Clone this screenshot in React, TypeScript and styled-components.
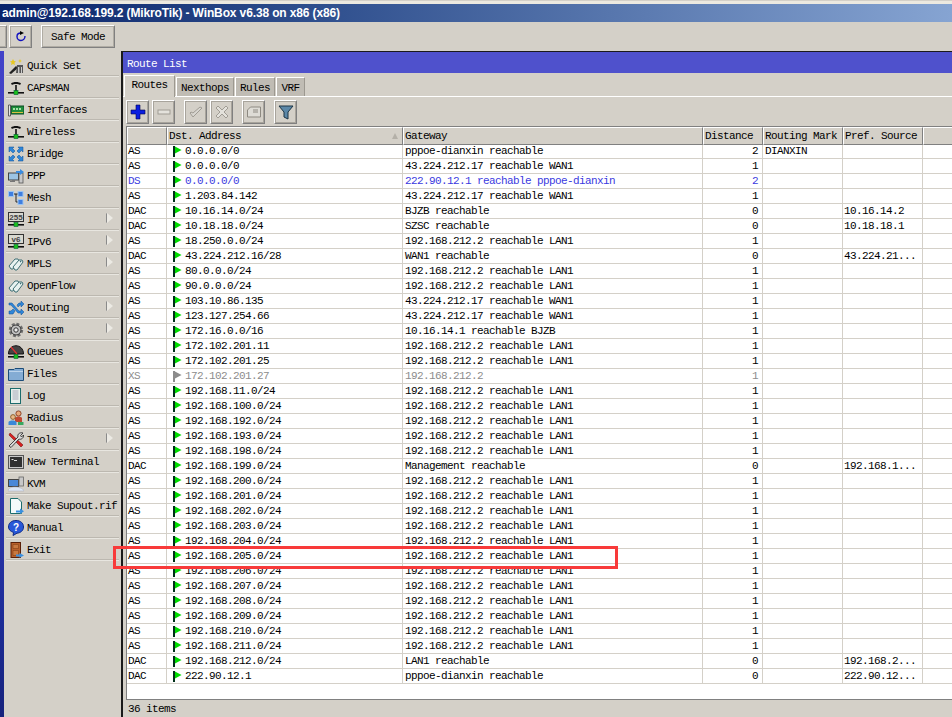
import React from "react";
import styled, { createGlobalStyle } from "styled-components";

const Global = createGlobalStyle`
  html, body { margin: 0; padding: 0; background: #d4d0c8; }
  * { box-sizing: border-box; }
`;

const MONO = `"Liberation Mono", "DejaVu Sans Mono", monospace`;

const Page = styled.div`
  position: relative;
  width: 952px;
  height: 717px;
  overflow: hidden;
  display: flex;
  flex-direction: column;
  background: #d4d0c8;
  font-family: ${MONO};
  font-size: 11px;
  letter-spacing: -0.6px;
  color: #000;
`;
const TopEdge = styled.div`
  height: 4px;
  flex: none;
  background: #ece9e0;
  border-top: 1px solid #d4d0c8;
`;
const TitleBar = styled.div`
  height: 18px;
  flex: none;
  background: linear-gradient(90deg, #0a246a 0%, #2d4d8c 32%, #86a4d2 100%);
  color: #fff;
  font-family: "Liberation Sans", Arial, sans-serif;
  font-weight: 700;
  font-size: 12px;
  letter-spacing: -0.13px;
  line-height: 18px;
  padding-left: 2px;
  white-space: nowrap;
`;
const TopBar = styled.div`
  height: 29px;
  flex: none;
  display: flex;
  align-items: flex-start;
  padding-top: 3px;
  margin-left: -9px;
  gap: 1px;
`;
const TopButton = styled.div<{ $w: number; $gap?: number }>`
  width: ${(p) => p.$w}px;
  height: 23px;
  margin-right: ${(p) => p.$gap ?? 0}px;
  border: 1px solid;
  border-color: #fff #808080 #808080 #fff;
  outline: 1px solid #b0aca4;
  outline-offset: -2px;
  display: flex;
  align-items: center;
  justify-content: center;
`;
const Body = styled.div`
  flex: 1;
  display: flex;
  min-height: 0;
`;
const Strip = styled.div`
  width: 4px;
  flex: none;
  background: linear-gradient(180deg, #4242c8 0%, #3a3cb8 55%, #1c2c98 85%, #16227c 100%);
`;
const Menu = styled.nav`
  width: 119px;
  flex: none;
  padding: 3px 2px 0 2px;
  border-right: 2px solid #1a1a1a;
`;
const MenuItem = styled.div`
  height: 22px;
  width: 113px;
  display: flex;
  align-items: center;
  gap: 3px;
  padding: 2px 0 0 2px;
  border-bottom: 1px solid #bcb8b0;
  box-shadow: 0 1px 0 #e8e6e0;
  position: relative;
  white-space: nowrap;
`;
const MenuIcon = styled.span`
  width: 16px;
  height: 16px;
  flex: none;
  display: block;
  svg { display: block; }
`;
const Arrow = styled.span`
  position: absolute;
  right: 6px;
  top: 5px;
  width: 0;
  height: 0;
  border-left: 6px solid #eceae4;
  border-top: 5px solid transparent;
  border-bottom: 5px solid transparent;
  filter: drop-shadow(-0.5px 0 0 #8a8a8a);
`;
const Window = styled.section`
  flex: 1;
  min-width: 0;
  display: flex;
  flex-direction: column;
  border-top: 1px solid #1a1a1a;
`;
const WinTitle = styled.div`
  height: 21px;
  flex: none;
  background: #4f51cc;
  color: #fff;
  line-height: 25px;
  padding-left: 4px;
  overflow: hidden;
`;
const Tabs = styled.div`
  height: 24px;
  flex: none;
  display: flex;
  align-items: flex-end;
  padding-left: 1px;
  border-bottom: 1px solid #fff;
`;
const Tab = styled.div<{ $w: number; $active?: boolean }>`
  width: ${(p) => p.$w}px;
  height: ${(p) => (p.$active ? 22 : 19)}px;
  margin-right: 1px;
  margin-bottom: ${(p) => (p.$active ? -1 : 0)}px;
  background: ${(p) => (p.$active ? "#d4d0c8" : "#c0bcb4")};
  border-top: 1px solid #fff;
  border-left: 1px solid #fff;
  border-right: 1px solid #9c9890;
  text-align: center;
  line-height: ${(p) => (p.$active ? 19 : 20)}px;
  position: relative;
`;
const Tools = styled.div`
  height: 29px;
  flex: none;
  display: flex;
  align-items: flex-start;
  padding: 3px 0 0 3px;
`;
const ToolButton = styled.div<{ $after: number }>`
  width: 23px;
  height: 24px;
  margin-right: ${(p) => p.$after}px;
  border: 1px solid;
  border-color: #fff #808080 #808080 #fff;
  outline: 1px solid #a8a49c;
  outline-offset: -2px;
  display: flex;
  align-items: center;
  justify-content: center;
`;
const Table = styled.div`
  flex: 1;
  min-height: 0;
  margin-left: 3px;
  background: #fff;
  border-top: 1px solid #808080;
  border-left: 1px solid #808080;
`;
const COLS = "40px 236px 300px 60px 80px 80px 1fr";
const HeadRow = styled.div`
  height: 17px;
  display: grid;
  grid-template-columns: ${COLS};
  background: #d4d0c8;
`;
const HeadCell = styled.div`
  position: relative;
  padding-left: 1px;
  line-height: 16px;
  white-space: nowrap;
  border-right: 1px solid #808080;
  border-bottom: 1px solid #808080;
  border-top: 1px solid #fff;
  border-left: 1px solid #fff;
  &:last-child { border-right: 0; }
`;
const Sort = styled.span`
  position: absolute;
  right: 4px;
  top: 5px;
  width: 0;
  height: 0;
  border-left: 3px solid transparent;
  border-right: 3px solid transparent;
  border-bottom: 6px solid #b4b0a8;
`;
const Row = styled.div<{ $tone?: "blue" | "gray" }>`
  height: 15px;
  display: grid;
  grid-template-columns: ${COLS};
  color: ${(p) => (p.$tone === "blue" ? "#3a3ae0" : p.$tone === "gray" ? "#8c8c8c" : "#000")};
`;
const Cell = styled.div<{ $right?: boolean; $pad?: number }>`
  border-right: 1px solid #d4d0c8;
  border-bottom: 1px solid #d4d0c8;
  line-height: 14px;
  padding: 0 ${(p) => (p.$right ? 4 : 0)}px 0 ${(p) => p.$pad ?? 2}px;
  white-space: nowrap;
  overflow: hidden;
  display: flex;
  justify-content: ${(p) => (p.$right ? "flex-end" : "flex-start")};
  align-items: center;
  &:last-child { border-right: 0; }
`;
const FlagMark = styled.svg`
  flex: none;
  margin-right: 3px;
`;
const Status = styled.div`
  height: 18px;
  flex: none;
  margin-left: 3px;
  border-top: 1px solid #808080;
  padding-left: 2px;
  line-height: 18px;
  background: #d4d0c8;
`;
const Highlight = styled.div`
  position: absolute;
  left: 113px;
  top: 546px;
  width: 505px;
  height: 23px;
  border: 3px solid #f83a3a;
  pointer-events: none;
`;

const Flag = ({ c, e }: { c: string; e: string }) => (
  <FlagMark width="9" height="11" viewBox="0 0 9 11">
    <rect x="0" y="0" width="2" height="11" fill={e} />
    <path d="M2 0.5 L8.6 4 L2 7.5 Z" fill={c} />
  </FlagMark>
);

const S = (p: { children: React.ReactNode }) => (
  <svg width="16" height="16" viewBox="0 0 16 16">{p.children}</svg>
);

const Antenna = () => (
  <S>
    <path d="M0 12h16v1.6H0z" fill="#111" />
    <path d="M7.2 5h1.6v6H7.2z" fill="#111" />
    <path d="M3 3.4C5 1.4 11 1.4 13 3.4L12 5C10 3.6 6 3.6 4 5Z" fill="#111" />
    <rect x="6" y="10.6" width="4" height="4" fill="#1cc01c" stroke="#063" strokeWidth="0.6" />
  </S>
);
const Tag = () => (
  <S>
    <path d="M1 10 L7 3 H10 L11 5 L5 13 H3Z" fill="#e8f2f0" stroke="#3f6f74" />
    <path d="M5 11 L11 4 H14 L15 6 L9 14 H7Z" fill="#e8f2f0" stroke="#3f6f74" />
    <circle cx="12.6" cy="5.6" r="0.8" fill="#3f6f74" />
  </S>
);

const icons: Record<string, React.ReactNode> = {
  "Quick Set": (
    <S>
      <path d="M1 15 L8 8 L10 10 L3 16Z" fill="#222" />
      <path d="M9 7h6v8H8z" fill="#555" />
      <path d="M10 9h1.4v6H10zM13 9h1v6h-1z" fill="#ccc" />
      <path d="M5 1l1 2 2 .4-1.6 1.4L7 7 5 6 3 7l.6-2.2L2 3.4 4 3zM12 1l.6 1.4L14 3l-1.4.6L12 5l-.6-1.4L10 3l1.4-.6z" fill="#e8c820" />
    </S>
  ),
  CAPsMAN: <Antenna />,
  Wireless: <Antenna />,
  Interfaces: (
    <S>
      <rect x="3" y="4" width="13" height="8" fill="#1f8f3c" stroke="#0d4a20" />
      <path d="M5 6h2v2H5zM8 6h2v2H8zM11 6h2v2h-2z" fill="#a8e0a8" />
      <path d="M4 10h11v1H4z" fill="#d8c040" />
      <path d="M0.5 3h2v11h-2z" fill="#e8e8e8" stroke="#444" strokeWidth="0.8" />
    </S>
  ),
  Bridge: (
    <S>
      <path d="M1 1h5L4.6 2.6 7 5 5 7 2.6 4.6 1 6zM15 1v5l-1.6-1.4L11 7 9 5l2.4-2.4L10 1zM1 15v-5l1.6 1.4L5 9l2 2-2.4 2.4L6 15zM15 15h-5l1.4-1.6L9 11l2-2 2.4 2.4L15 10z" fill="#2f86d8" stroke="#0c4f96" strokeWidth="0.5" />
    </S>
  ),
  PPP: (
    <S>
      <rect x="0.5" y="5" width="10" height="7" fill="#9cc4e4" stroke="#444" />
      <path d="M4 12h3v2H2v-1h2z" fill="#777" />
      <rect x="11" y="5" width="4" height="10" fill="#c8c8c8" stroke="#555" strokeWidth="0.8" />
      <path d="M8 3h4V1l4 3-4 3V5H8z" fill="#3a8ce0" />
    </S>
  ),
  Mesh: (
    <S>
      <path d="M3 4H13M8 4V12M8 12H13" stroke="#222" strokeWidth="1" fill="none" />
      <rect x="0.5" y="1.5" width="5" height="5" fill="#3f7fe0" stroke="#9cc4f0" />
      <rect x="10" y="1.5" width="5" height="5" fill="#3f7fe0" stroke="#9cc4f0" />
      <rect x="10" y="9.5" width="5" height="5" fill="#3f7fe0" stroke="#9cc4f0" />
    </S>
  ),
  IP: (
    <S>
      <rect x="0.5" y="0.5" width="15" height="9" fill="#d8d8d0" stroke="#333" />
      <text x="8" y="8" fontSize="8" fontFamily="Liberation Sans" fontWeight="700" textAnchor="middle" fill="#444" letterSpacing="0">255</text>
      <path d="M0 12h16v1.6H0z" fill="#111" />
      <rect x="6" y="10.5" width="4" height="4" fill="#1cc01c" stroke="#063" strokeWidth="0.6" />
    </S>
  ),
  IPv6: (
    <S>
      <rect x="0.5" y="0.5" width="15" height="9" fill="#d8d8d0" stroke="#333" />
      <text x="8" y="8" fontSize="8" fontFamily="Liberation Sans" fontWeight="700" textAnchor="middle" fill="#444" letterSpacing="0">v6</text>
      <path d="M0 12h16v1.6H0z" fill="#111" />
      <rect x="6" y="10.5" width="4" height="4" fill="#1cc01c" stroke="#063" strokeWidth="0.6" />
    </S>
  ),
  MPLS: <Tag />,
  OpenFlow: <Tag />,
  Routing: (
    <S>
      <path d="M1 3h3l7 8h2V9l3 3-3 3v-2h-3L3 5H1zM1 11h2l2-2 2 2-2 3H1zM9 5l2-2h2V1l3 3-3 3V5h-1L10 7z" fill="#2f86d8" stroke="#0c4f96" strokeWidth="0.5" />
    </S>
  ),
  System: (
    <S>
      <circle cx="8" cy="8" r="5.4" fill="none" stroke="#6e6e6e" strokeWidth="3.6" strokeDasharray="2.6 1.6" />
      <circle cx="8" cy="8" r="5" fill="#c4c4c4" stroke="#333" strokeWidth="1" />
      <circle cx="8" cy="8" r="2.2" fill="#eee" stroke="#333" />
    </S>
  ),
  Queues: (
    <S>
      <path d="M0.5 10 C0.5 -1 15.5 -1 15.5 10Z" fill="#444" stroke="#111" />
      <path d="M3 3L9 10" stroke="#e03030" strokeWidth="1.2" />
      <path d="M0 12h16v1.6H0z" fill="#111" />
      <rect x="6" y="10.5" width="4" height="4" fill="#1cc01c" stroke="#063" strokeWidth="0.6" />
    </S>
  ),
  Files: (
    <S>
      <path d="M0.5 3.5V14.5H15.5V2.5H7L6 3.5Z" fill="#84acd4" stroke="#1c4c78" />
      <path d="M1 5h14v1H1z" fill="#bcd4ec" />
    </S>
  ),
  Log: (
    <S>
      <rect x="2.5" y="0.5" width="10" height="15" fill="#e8f0ec" stroke="#1c6c6c" />
      <path d="M4.5 3h6M4.5 5h6M4.5 7h6M4.5 9h6M4.5 11h6" stroke="#aab" strokeWidth="1" />
    </S>
  ),
  Radius: (
    <S>
      <circle cx="10.5" cy="3.5" r="2.6" fill="#e8a878" stroke="#7a2a10" strokeWidth="0.8" />
      <path d="M7 12V8c1-2 6-2 7 0v4z" fill="#c04830" />
      <circle cx="5" cy="7" r="2.4" fill="#e8b888" stroke="#7a4a10" strokeWidth="0.8" />
      <path d="M0.5 15v-3c1-2 7-2 8 0v3z" fill="#3a88d8" />
      <path d="M10 15v-3h5.5v3z" fill="#38a860" />
    </S>
  ),
  Tools: (
    <S>
      <path d="M2 1 L15 13 L13 15 L1 3Z" fill="#d82020" stroke="#600" strokeWidth="0.5" />
      <path d="M1 14 L10 5 C9 2 12 0 15 1 L12.5 3.5 L13.5 5 L15.5 3 C16 6 13 8 11 7 L3 15.5Z" fill="#d8d8d8" stroke="#222" strokeWidth="0.8" />
    </S>
  ),
  "New Terminal": (
    <S>
      <rect x="0.5" y="1.5" width="15" height="13" fill="#c8c8c8" stroke="#555" />
      <rect x="2" y="3" width="12" height="10" fill="#303030" />
      <path d="M3.5 5h2v1h-2zM6 6h3v1H6z" fill="#ddd" />
    </S>
  ),
  KVM: (
    <S>
      <rect x="0.5" y="3.5" width="10" height="7" fill="#4a88d8" stroke="#444" />
      <rect x="11" y="1" width="4.5" height="9" fill="#c8c8c8" stroke="#666" strokeWidth="0.8" />
      <path d="M0 15c0-3 4-4 7-4s8 1 9 4z" fill="#dce6f4" stroke="#aab" strokeWidth="0.5" />
    </S>
  ),
  "Make Supout.rif": (
    <S>
      <path d="M2.5 0.5H10L13.5 4V15.5H2.5Z" fill="#f4fafa" stroke="#1c6c6c" />
      <path d="M8 12.5h4V10.5l4 2.8-4 2.7V14.4H8z" fill="#3a90e0" />
    </S>
  ),
  Manual: (
    <S>
      <path d="M8 0.5C12.5 0.5 15.5 3 15.5 7S12 13 9 13.2L5 15.5l.6-3C2.5 11.4.5 9.6.5 7 .5 3 3.5.5 8 .5Z" fill="#2858d8" stroke="#102c88" />
      <text x="8" y="11" fontSize="10" fontFamily="Liberation Sans" fontWeight="700" textAnchor="middle" fill="#fff" letterSpacing="0">?</text>
    </S>
  ),
  Exit: (
    <S>
      <rect x="3" y="0.5" width="9.5" height="15" fill="#b8602c" stroke="#5a2008" />
      <path d="M5 2.5h5.5v4H5zM5 8.5h5.5v5H5z" fill="#c87840" stroke="#7a3810" strokeWidth="0.5" />
      <path d="M8 12.5h3.5V11l4.5 2.4-4.5 2.4v-1.4H8z" fill="#3a90e0" />
    </S>
  ),
};

const menu: [string, boolean?][] = [
  ["Quick Set"], ["CAPsMAN"], ["Interfaces"], ["Wireless"], ["Bridge"], ["PPP"], ["Mesh"],
  ["IP", true], ["IPv6", true], ["MPLS", true], ["OpenFlow"], ["Routing", true], ["System", true],
  ["Queues"], ["Files"], ["Log"], ["Radius"], ["Tools", true], ["New Terminal"], ["KVM"],
  ["Make Supout.rif"], ["Manual"], ["Exit"],
];

const LAN = "192.168.212.2 reachable LAN1";
const WAN = "43.224.212.17 reachable WAN1";
type R = [string, string, string, string, string?, string?];
const rows: R[] = [
  ["AS", "0.0.0.0/0", "pppoe-dianxin reachable", "2", "DIANXIN"],
  ["AS", "0.0.0.0/0", WAN, "1"],
  ["DS", "0.0.0.0/0", "222.90.12.1 reachable pppoe-dianxin", "2"],
  ["AS", "1.203.84.142", WAN, "1"],
  ["DAC", "10.16.14.0/24", "BJZB reachable", "0", "", "10.16.14.2"],
  ["DAC", "10.18.18.0/24", "SZSC reachable", "0", "", "10.18.18.1"],
  ["AS", "18.250.0.0/24", LAN, "1"],
  ["DAC", "43.224.212.16/28", "WAN1 reachable", "0", "", "43.224.21..."],
  ["AS", "80.0.0.0/24", LAN, "1"],
  ["AS", "90.0.0.0/24", LAN, "1"],
  ["AS", "103.10.86.135", WAN, "1"],
  ["AS", "123.127.254.66", WAN, "1"],
  ["AS", "172.16.0.0/16", "10.16.14.1 reachable BJZB", "1"],
  ["AS", "172.102.201.11", LAN, "1"],
  ["AS", "172.102.201.25", LAN, "1"],
  ["XS", "172.102.201.27", "192.168.212.2", "1"],
  ["AS", "192.168.11.0/24", LAN, "1"],
  ["AS", "192.168.100.0/24", LAN, "1"],
  ["AS", "192.168.192.0/24", LAN, "1"],
  ["AS", "192.168.193.0/24", LAN, "1"],
  ["AS", "192.168.198.0/24", LAN, "1"],
  ["DAC", "192.168.199.0/24", "Management reachable", "0", "", "192.168.1..."],
  ["AS", "192.168.200.0/24", LAN, "1"],
  ["AS", "192.168.201.0/24", LAN, "1"],
  ["AS", "192.168.202.0/24", LAN, "1"],
  ["AS", "192.168.203.0/24", LAN, "1"],
  ["AS", "192.168.204.0/24", LAN, "1"],
  ["AS", "192.168.205.0/24", LAN, "1"],
  ["AS", "192.168.206.0/24", LAN, "1"],
  ["AS", "192.168.207.0/24", LAN, "1"],
  ["AS", "192.168.208.0/24", LAN, "1"],
  ["AS", "192.168.209.0/24", LAN, "1"],
  ["AS", "192.168.210.0/24", LAN, "1"],
  ["AS", "192.168.211.0/24", LAN, "1"],
  ["DAC", "192.168.212.0/24", "LAN1 reachable", "0", "", "192.168.2..."],
  ["DAC", "222.90.12.1", "pppoe-dianxin reachable", "0", "", "222.90.12..."],
];

const toolIcons = [
  { after: 3, svg: <path d="M7 2h4v5h5v4h-5v5H7v-5H2V7h5z" fill="#0a1ee0" stroke="#000050" strokeWidth="0.6" /> },
  { after: 9, svg: <rect x="3" y="7" width="12" height="4" fill="#e4e2dc" stroke="#a09c94" /> },
  { after: 3, svg: <path d="M3 10l3 4 9-9-2-1-7 6-2-1z" fill="#d8d6d0" stroke="#a09c94" /> },
  { after: 9, svg: <path d="M3 5l2-2 4 4 4-4 2 2-4 4 4 4-2 2-4-4-4 4-2-2 4-4z" fill="#e4e2dc" stroke="#a09c94" /> },
  { after: 9, svg: <path d="M2.5 7l3-3h10v10H2.5zM8 7h5M8 9h5" fill="#dedcd6" stroke="#8e8a82" /> },
  { after: 0, svg: <path d="M2 3h14L11 9v7l-4-2V9z" fill="#5c88a8" stroke="#1c3444" /> },
];

export default function App() {
  return (
    <Page>
      <Global />
      <TopEdge />
      <TitleBar>admin@192.168.199.2 (MikroTik) - WinBox v6.38 on x86 (x86)</TitleBar>
      <TopBar>
        <TopButton $w={16} $gap={1} />
        <TopButton $w={23} $gap={8}>
          <svg width="14" height="14" viewBox="0 0 14 14">
            <path d="M11 6c0 3-2 4.5-4 4.5S3 9 3 6.5 5 3 7 3" fill="none" stroke="#1010c0" strokeWidth="1.4" />
            <path d="M6 1l4 2-4 2z" fill="#000" />
          </svg>
        </TopButton>
        <TopButton $w={74}>Safe Mode</TopButton>
      </TopBar>
      <Body>
        <Strip />
        <Menu>
          {menu.map(([name, sub]) => (
            <MenuItem key={name}>
              <MenuIcon>{icons[name]}</MenuIcon>
              {name}
              {sub && <Arrow />}
            </MenuItem>
          ))}
        </Menu>
        <Window>
          <WinTitle>Route List</WinTitle>
          <Tabs>
            <Tab $w={51} $active>Routes</Tab>
            <Tab $w={58}>Nexthops</Tab>
            <Tab $w={40}>Rules</Tab>
            <Tab $w={29}>VRF</Tab>
          </Tabs>
          <Tools>
            {toolIcons.map((t, i) => (
              <ToolButton key={i} $after={t.after}>
                <svg width="18" height="18" viewBox="0 0 18 18">{t.svg}</svg>
              </ToolButton>
            ))}
          </Tools>
          <Table>
            <HeadRow>
              <HeadCell />
              <HeadCell>Dst. Address<Sort /></HeadCell>
              <HeadCell>Gateway</HeadCell>
              <HeadCell>Distance</HeadCell>
              <HeadCell>Routing Mark</HeadCell>
              <HeadCell>Pref. Source</HeadCell>
              <HeadCell />
            </HeadRow>
            {rows.map((r, i) => {
              const tone = r[0] === "DS" ? "blue" : r[0] === "XS" ? "gray" : undefined;
              return (
                <Row key={i} $tone={tone}>
                  <Cell $pad={1}>{r[0]}</Cell>
                  <Cell $pad={6}>
                    {tone === "gray" ? <Flag c="#8c8c8c" e="#8c8c8c" /> : <Flag c="#00dc00" e="#003018" />}
                    {r[1]}
                  </Cell>
                  <Cell>{r[2]}</Cell>
                  <Cell $right>{r[3]}</Cell>
                  <Cell>{r[4]}</Cell>
                  <Cell $pad={1}>{r[5]}</Cell>
                  <Cell />
                </Row>
              );
            })}
          </Table>
          <Status>36 items</Status>
        </Window>
      </Body>
      <Highlight />
    </Page>
  );
}
